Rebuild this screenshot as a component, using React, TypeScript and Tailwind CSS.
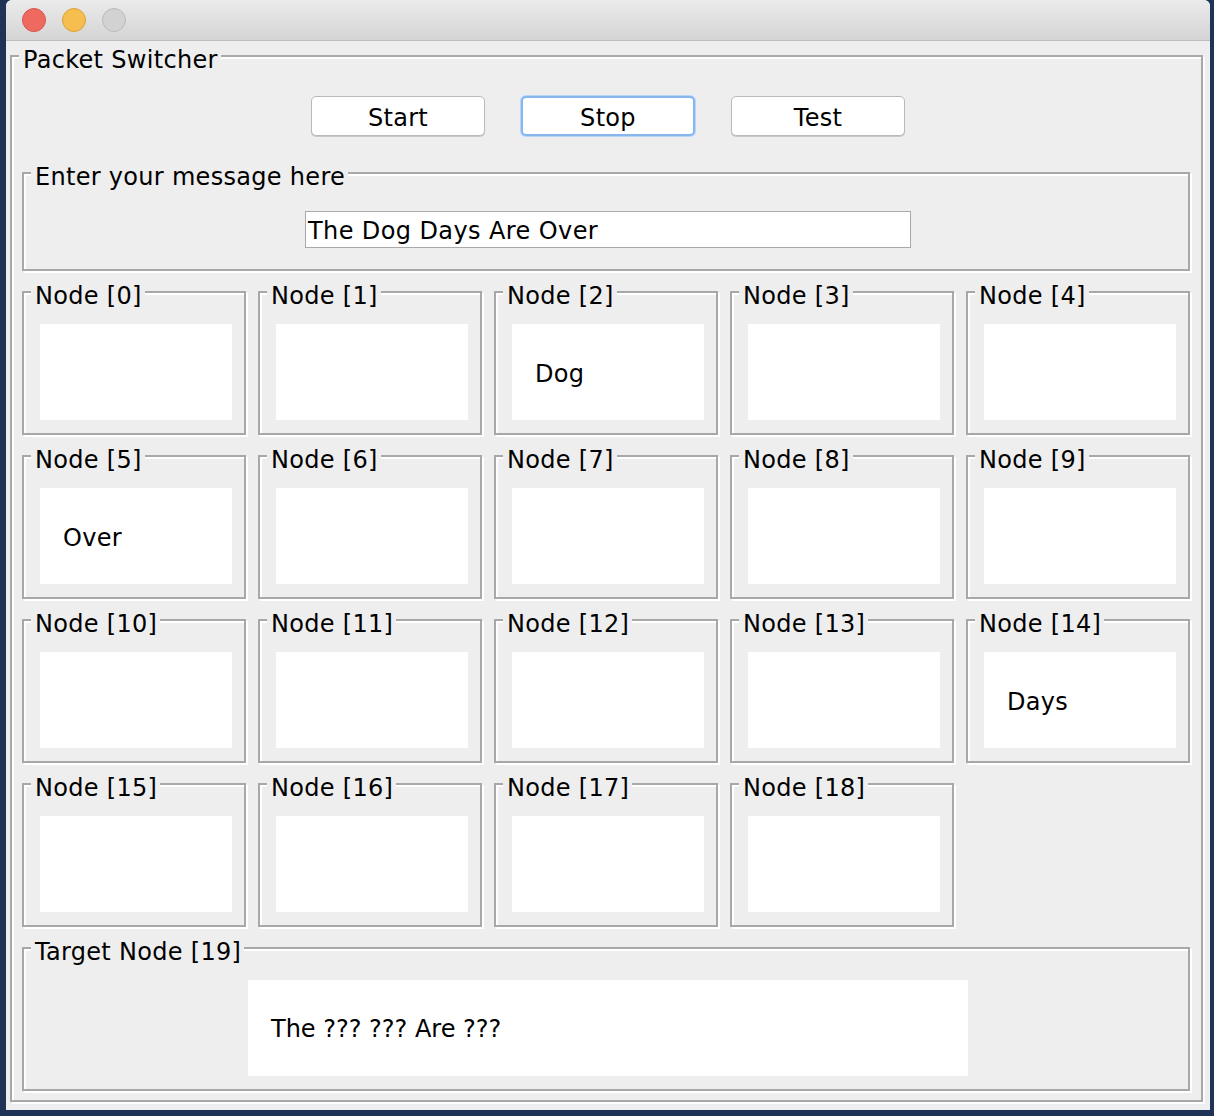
import React from "react";
import clsx from "clsx";

type GroupProps = {
  title: string;
  className?: string;
  children?: React.ReactNode;
};

// etched titled border, like Swing's TitledBorder on Aqua
function Group({ title, className, children }: GroupProps) {
  return (
    <div
      className={clsx(
        "relative border-2 border-[#a8a8a8] shadow-[inset_2px_2px_0_#ffffff,2px_2px_0_#ffffff]",
        className
      )}
    >
      <span className="absolute -top-[11px] left-[7px] bg-[#eeeeee] pl-[4px] pr-[3px] text-[24px] tracking-[0.3px] leading-[28px] whitespace-nowrap">
        {title}
      </span>
      {children}
    </div>
  );
}

const nodeText: Record<number, string> = {
  2: "Dog",
  5: "Over",
  14: "Days",
};

function NodeBox({ index }: { index: number }) {
  return (
    <Group title={`Node [${index}]`} className="w-[224px] h-[144px] pt-[31px] pl-[16px]">
      <div className="w-[192px] h-[96px] bg-white flex items-center pl-[23px] pt-[3px] text-[24px] tracking-[0.3px]">
        {nodeText[index] ?? ""}
      </div>
    </Group>
  );
}

function Button({ label, focused }: { label: string; focused?: boolean }) {
  return (
    <button
      className={clsx(
        "w-[174px] h-[40px] rounded-[5px] bg-white text-[24px] tracking-[0.3px] leading-none pt-[3px]",
        focused
          ? "border-2 border-[#86b6ee] shadow-[0_0_0_1px_#b9d5f5]"
          : "border border-[#b9b9b9] shadow-[0_1px_0_#c8c8c8]"
      )}
    >
      {label}
    </button>
  );
}

export default function App() {
  const nodes = Array.from({ length: 19 }, (_, i) => i);

  return (
    <div className="min-h-screen bg-[#1f3357] font-['DejaVu_Sans',sans-serif] text-black">
      <div className="ml-[6px] w-[1204px] h-[1110px] rounded-t-[6px] bg-[#eeeeee] overflow-hidden flex flex-col">
        {/* title bar */}
        <div className="h-[41px] shrink-0 bg-gradient-to-b from-[#ebebeb] to-[#d4d4d4] border-b border-[#bdbdbd] flex items-center gap-[16px] pl-[16px]">
          <span className="w-[24px] h-[24px] rounded-full bg-[#ee6a5e] border border-[#d8554a]" />
          <span className="w-[24px] h-[24px] rounded-full bg-[#f5be4f] border border-[#dca13c]" />
          <span className="w-[24px] h-[24px] rounded-full bg-[#d2d2d2] border border-[#bababa]" />
        </div>

        <div className="pl-[4px] pt-[14px]">
          <Group title="Packet Switcher" className="w-[1193px] h-[1047px] pl-[10px] pt-[39px]">
            <div className="w-[1168px] flex justify-center gap-[36px] pl-[4px]">
              <Button label="Start" />
              <Button label="Stop" focused />
              <Button label="Test" />
            </div>

            <Group title="Enter your message here" className="mt-[36px] w-[1168px] h-[99px] pt-[37px] pl-[4px] flex justify-center items-start">
              <div className="w-[606px] h-[37px] bg-white border border-[#a9a9a9] flex items-center pl-[2px] pt-[3px] text-[24px] tracking-[0.4px]">
                The Dog Days Are Over
              </div>
            </Group>

            <div className="mt-[20px] w-[1168px] grid grid-cols-5 gap-x-[12px] gap-y-[20px]">
              {nodes.map((i) => (
                <NodeBox key={i} index={i} />
              ))}
            </div>

            <Group title="Target Node [19]" className="mt-[20px] w-[1168px] h-[144px] pt-[31px] pl-[16px] pr-[12px] flex justify-center items-start">
              <div className="w-[720px] h-[96px] bg-white flex items-center pl-[23px] pt-[2px] text-[24px]">
                The ??? ??? Are ???
              </div>
            </Group>
          </Group>
        </div>
      </div>
    </div>
  );
}
